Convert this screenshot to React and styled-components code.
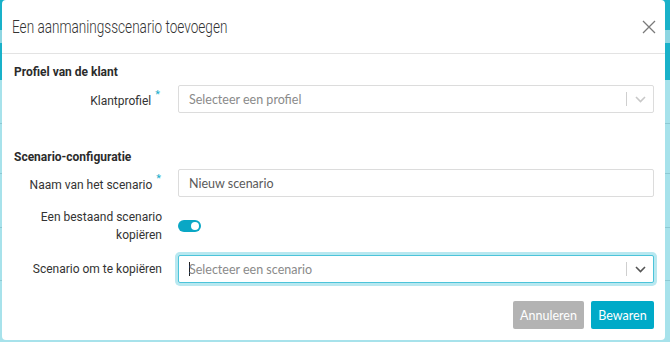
import React, { useState } from "react";
import styled, { createGlobalStyle } from "styled-components";

const GlobalStyle = createGlobalStyle`
  html, body {
    margin: 0;
    padding: 0;
  }
  body {
    width: 670px;
    height: 342px;
    overflow: hidden;
    font-family: Roboto, "Liberation Sans", sans-serif;
    background: linear-gradient(
      to bottom,
      #19b1c9 0 30px,
      #8ed6e2 30px 43px,
      #19b1c9 43px 80px,
      #a7e2eb 80px 123px,
      #8cc9d3 123px 124px,
      #a7e2eb 124px 173px,
      #8cc9d3 173px 174px,
      #a7e2eb 174px 227px,
      #8cc9d3 227px 228px,
      #a7e2eb 228px 280px,
      #8cc9d3 280px 281px,
      #a7e2eb 281px
    );
  }
`;

const Page = styled.div`
  padding: 0 5px 2px 2px;
`;

const Modal = styled.div`
  background: #fff;
  border-radius: 4px;
  height: 340px;
  box-sizing: border-box;
  display: flex;
  flex-direction: column;
`;

const Header = styled.div`
  height: 53px;
  border-bottom: 1px solid #e3e3e3;
  display: flex;
  align-items: center;
  justify-content: space-between;
  padding: 0 8px 0 10px;
`;

const Title = styled.h4`
  margin: 0;
  font-family: Roboto, sans-serif;
  font-weight: 300;
  font-size: 18px;
  color: #333;
  display: inline-block;
  transform: scaleX(0.755);
  transform-origin: left center;
  white-space: nowrap;
`;

const CloseButton = styled.button`
  border: 0;
  background: none;
  padding: 0;
  width: 17px;
  height: 17px;
  margin-top: 1px;
  display: flex;
  align-items: center;
  justify-content: center;
  cursor: pointer;
`;

const Body = styled.div`
  padding: 10px 11px 0 11px;
  flex: 1;
`;

const SectionTitle = styled.div`
  font-family: Roboto, sans-serif;
  font-weight: 700;
  font-size: 12px;
  line-height: 16px;
  color: #2b2b2b;
  margin: ${(p) => p.$top || 0}px 0 ${(p) => p.$bottom || 5}px 1px;
`;

const Row = styled.div`
  display: grid;
  grid-template-columns: 149px 1fr;
  column-gap: 16px;
  align-items: center;
  margin-top: ${(p) => p.$top || 0}px;
`;

const Label = styled.label`
  text-align: right;
  font-family: Roboto, sans-serif;
  font-size: 12px;
  line-height: 18px;
  color: #333;
  padding-right: ${(p) => p.$pad || 0}px;
`;

const Required = styled.sup`
  color: #17aecb;
  font-size: 11px;
  margin-left: 4px;
  position: relative;
  top: -2px;
`;

const InputBox = styled.div`
  height: 28px;
  box-sizing: border-box;
  border: 1px solid ${(p) => (p.$focused ? "#4cc4da" : "#dcdcdc")};
  box-shadow: ${(p) => (p.$focused ? "0 0 0 3px #b8e8f0" : "none")};
  border-radius: 2px;
  display: flex;
  align-items: center;
  padding-left: 10px;
  font-family: Lato, "Open Sans", sans-serif;
  font-size: 12.5px;
  color: ${(p) => (p.$value ? "#5a5a5a" : "#8a8a8a")};
  background: #fff;
`;

const Text = styled.span`
  flex: 1;
  white-space: nowrap;
`;

const Caret = styled.span`
  width: 1px;
  height: 14px;
  background: #222;
  margin-right: -1px;
`;

const Indicator = styled.div`
  display: flex;
  align-items: center;
  height: 100%;
`;

const Separator = styled.span`
  width: 1px;
  height: 14px;
  background: #cfcfcf;
`;

const Chevron = styled.span`
  width: 26px;
  display: flex;
  justify-content: center;
`;

const Toggle = styled.button`
  width: 23px;
  height: 12px;
  border: 0;
  padding: 0 2px;
  border-radius: 6px;
  background: #0aa7c5;
  display: flex;
  align-items: center;
  justify-content: flex-end;
  cursor: pointer;
  &::after {
    content: "";
    width: 8px;
    height: 8px;
    border-radius: 50%;
    background: #fff;
  }
`;

const Footer = styled.div`
  display: flex;
  justify-content: flex-end;
  gap: 7px;
  margin-top: 18px;
`;

const Button = styled.button`
  height: 28px;
  border: 0;
  border-radius: 2px;
  padding: 0;
  font-family: Lato, "Open Sans", sans-serif;
  font-size: 12.5px;
  color: #fff;
  background: ${(p) => (p.$primary ? "#00aac8" : "#b3b3b3")};
  width: ${(p) => (p.$primary ? 63 : 71)}px;
  cursor: pointer;
`;

function SelectField({ placeholder, focused }) {
  return (
    <InputBox $focused={focused}>
      {focused && <Caret />}
      <Text>{placeholder}</Text>
      <Indicator>
        <Separator />
        <Chevron>
          <svg width="11" height="7" viewBox="0 0 11 7">
            <path
              d="M1 1l4.5 4.5L10 1"
              fill="none"
              stroke={focused ? "#555" : "#c8c8c8"}
              strokeWidth="1.6"
            />
          </svg>
        </Chevron>
      </Indicator>
    </InputBox>
  );
}

export default function App() {
  const [copy, setCopy] = useState(true);

  return (
    <Page>
      <GlobalStyle />
      <Modal>
        <Header>
          <Title>Een aanmaningsscenario toevoegen</Title>
          <CloseButton aria-label="Sluiten">
            <svg width="14" height="14" viewBox="0 0 14 14">
              <path d="M1 1l12 12M13 1L1 13" stroke="#7a7a7a" strokeWidth="1.3" />
            </svg>
          </CloseButton>
        </Header>
        <Body>
          <SectionTitle $bottom={5}>Profiel van de klant</SectionTitle>
          <Row>
            <Label $pad={2}>
              Klantprofiel<Required>*</Required>
            </Label>
            <SelectField placeholder="Selecteer een profiel" />
          </Row>

          <SectionTitle $top={36} $bottom={4}>
            Scenario-configuratie
          </SectionTitle>
          <Row>
            <Label $pad={1}>
              Naam van het scenario<Required>*</Required>
            </Label>
            <InputBox $value>
              <Text>Nieuw scenario</Text>
            </InputBox>
          </Row>
          <Row $top={11}>
            <Label>
              Een bestaand scenario
              <br />
              kopiëren
            </Label>
            <div>
              <Toggle aria-pressed={copy} onClick={() => setCopy(!copy)} />
            </div>
          </Row>
          <Row $top={11}>
            <Label>Scenario om te kopiëren</Label>
            <SelectField placeholder="Selecteer een scenario" focused />
          </Row>

          <Footer>
            <Button>Annuleren</Button>
            <Button $primary>Bewaren</Button>
          </Footer>
        </Body>
      </Modal>
    </Page>
  );
}
